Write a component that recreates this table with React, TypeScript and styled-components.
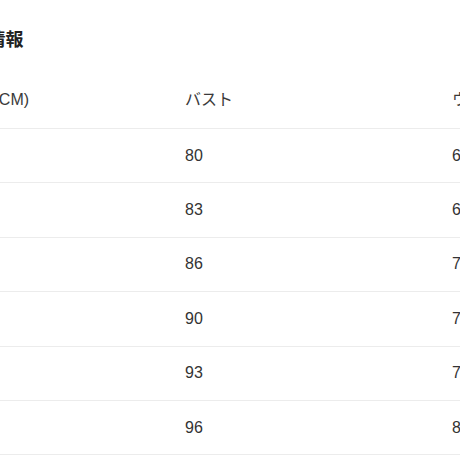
import React from "react";
import styled, { createGlobalStyle } from "styled-components";

const Global = createGlobalStyle`
  html, body { margin: 0; padding: 0; background: #ffffff; overflow: hidden; }
  body {
    font-family: "Liberation Sans", Arial, "Noto Sans CJK JP", sans-serif;
    color: #333333;
  }
`;

const Page = styled.div`
  margin-left: -66px;
  padding-top: 26px;
  width: 1200px;
`;

const Title = styled.h2`
  margin: 0 0 18px 0;
  font-size: 18px;
  line-height: 28px;
  font-weight: 700;
  color: #222222;
  font-family: "Liberation Sans", Arial, "Noto Sans CJK JP", sans-serif;
`;

const Row = styled.div<{ $head?: boolean }>`
  display: grid;
  grid-template-columns: 239px 267px 267px 267px;
  align-items: center;
  box-sizing: border-box;
  height: ${(p) => (p.$head ? "57px" : "54.4px")};
  border-bottom: 1.5px solid #ececec;
`;

const Cell = styled.div<{ $head?: boolean }>`
  padding: 0 12px;
  font-size: 16px;
  line-height: 24px;
  white-space: nowrap;
  color: ${(p) => (p.$head ? "#3a3a3a" : "#333333")};
`;

const headers = ["サイズ(CM)", "バスト", "ウエスト", "ヒップ"];
const rows = [
  ["S", "80", "62", "86"],
  ["M", "83", "65", "89"],
  ["L", "86", "70", "92"],
  ["XL", "90", "73", "96"],
  ["2XL", "93", "76", "99"],
  ["3XL", "96", "80", "102"],
];

export default function App() {
  return (
    <>
      <Global />
      <Page>
        <Title>サイズ情報</Title>
        <div role="table">
          <Row $head role="row">
            {headers.map((h) => (
              <Cell $head key={h} role="columnheader">
                {h}
              </Cell>
            ))}
          </Row>
          {rows.map((r) => (
            <Row key={r[0]} role="row">
              {r.map((v, i) => (
                <Cell key={i} role="cell">
                  {v}
                </Cell>
              ))}
            </Row>
          ))}
        </div>
      </Page>
    </>
  );
}
